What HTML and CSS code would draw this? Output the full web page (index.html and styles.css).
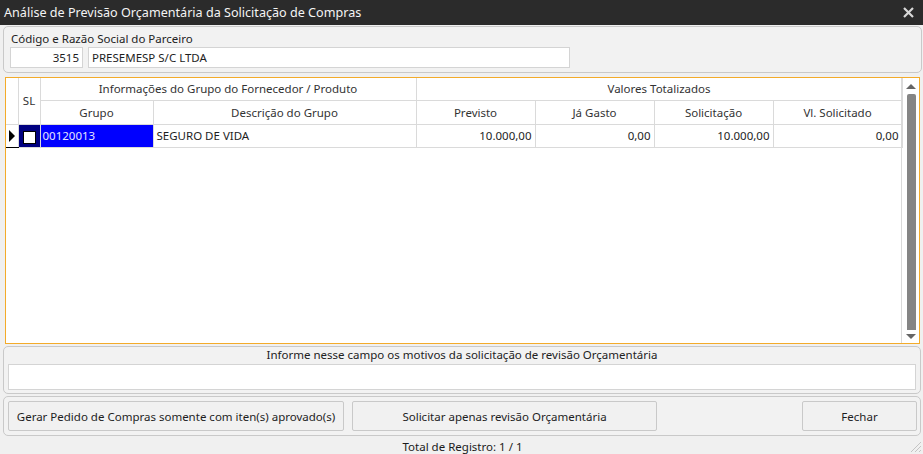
FILE: index.html
```html
<!DOCTYPE html>
<html lang="pt-BR">
<head>
<meta charset="utf-8">
<title>Análise de Previsão Orçamentária</title>
<link rel="stylesheet" href="styles.css">
</head>
<body>
<div class="window">
  <div class="titlebar">
    <span class="title">Análise de Previsão Orçamentária da Solicitação de Compras</span>
    <svg class="close" width="11" height="11" viewBox="0 0 11 11"><path d="M1 1 L10 10 M10 1 L1 10" stroke="#d8d8d8" stroke-width="2.2" fill="none"/></svg>
  </div>

  <div class="content">
    <section class="group partner">
      <div class="label">Código e Razão Social do Parceiro</div>
      <div class="fields">
        <div class="input code">3515</div>
        <div class="input name">PRESEMESP S/C LTDA</div>
      </div>
    </section>

    <div class="grid">
      <div class="grid-area">
        <table class="table">
          <colgroup>
            <col class="c-ind"><col class="c-sl"><col class="c-grupo"><col class="c-desc">
            <col class="c-val"><col class="c-val"><col class="c-val"><col class="c-last">
          </colgroup>
          <thead>
            <tr class="h1">
              <th rowspan="2" class="ind"></th>
              <th rowspan="2">SL</th>
              <th colspan="2">Informações do Grupo do Fornecedor / Produto</th>
              <th colspan="4">Valores Totalizados</th>
            </tr>
            <tr class="h2">
              <th>Grupo</th>
              <th>Descrição do Grupo</th>
              <th>Previsto</th>
              <th>Já Gasto</th>
              <th>Solicitação</th>
              <th>Vl. Solicitado</th>
            </tr>
          </thead>
          <tbody>
            <tr class="row">
              <td class="ind current"><span class="arrow"></span></td>
              <td class="sel"><span class="check"></span></td>
              <td class="code-cell">00120013</td>
              <td>SEGURO DE VIDA</td>
              <td class="num">10.000,00</td>
              <td class="num">0,00</td>
              <td class="num">10.000,00</td>
              <td class="num">0,00</td>
            </tr>
          </tbody>
        </table>
      </div>
      <div class="scrollbar">
        <span class="arrow-up"></span>
        <span class="thumb"></span>
        <span class="arrow-down"></span>
      </div>
    </div>

    <section class="group reason">
      <div class="label center">Informe nesse campo os motivos da solicitação de revisão Orçamentária</div>
      <div class="input memo"></div>
    </section>

    <section class="group actions">
      <button class="btn wide">Gerar Pedido de Compras somente com iten(s) aprovado(s)</button>
      <button class="btn mid">Solicitar apenas revisão Orçamentária</button>
      <button class="btn close-btn">Fechar</button>
    </section>

    <div class="status">Total de Registro: 1 / 1</div>
  </div>
  <svg class="grip" width="14" height="14" viewBox="0 0 14 14"><path d="M13 3 L3 13 M13 7 L7 13 M13 11 L11 13" stroke="#c4c4c4" stroke-width="1" fill="none"/></svg>
</div>
</body>
</html>
```

FILE: styles.css
```css
* { box-sizing: border-box; }

html, body {
  margin: 0;
  padding: 0;
  width: 923px;
  height: 454px;
  overflow: hidden;
  background: #f0f0f0;
  font-family: "Noto Sans", "Open Sans", sans-serif;
  font-size: 11.5px;
  color: #1e1e1e;
}

.window {
  position: relative;
  width: 923px;
  height: 454px;
  display: flex;
  flex-direction: column;
}

/* title bar */
.titlebar {
  height: 25px;
  background: #2b2b2b;
  color: #f4f4f4;
  display: flex;
  align-items: center;
  justify-content: space-between;
  padding: 0 9px 0 4px;
  font-size: 12.6px;
}
.title { line-height: 25px; }
.close { display: block; }

.content {
  flex: 1;
  display: flex;
  flex-direction: column;
  padding: 1px 1px 0 3px;
}

/* group boxes */
.group {
  border: 1px solid #c9c9c9;
  border-radius: 5px;
  background: #f2f2f2;
}
.label {
  line-height: 15px;
  color: #222;
}
.label.center { text-align: center; }

.partner {
  height: 47px;
  padding: 4px 0 0 6px;
}
.partner .label { padding-left: 1px; }
.fields {
  display: flex;
  gap: 5px;
  margin-top: 1px;
}
.input {
  background: #fff;
  border: 1px solid #d4d4d4;
  height: 21px;
  line-height: 19px;
  padding: 0 3px;
}
.code { width: 73px; text-align: right; }
.name { width: 482px; }

/* data grid */
.grid {
  margin: 4px 2px 0 2px;
  height: 267px;
  border: 1px solid #f3ab2a;
  background: #fff;
  display: flex;
}
.grid-area { width: 895px; }
.table {
  border-collapse: collapse;
  table-layout: fixed;
  width: 895px;
}
.c-ind { width: 12px; }
.c-sl { width: 22px; }
.c-grupo { width: 113px; }
.c-desc { width: 263px; }
.c-val { width: 119px; }
.c-last { width: 129px; }

.table th {
  font-weight: normal;
  color: #333;
  border: 1px solid #dadada;
  padding: 0;
  text-align: center;
  white-space: nowrap;
}
.table thead tr:first-child th { border-top: none; }
.table th.ind { border-left: none; }
.h1 th { height: 22px; }
.h2 th { height: 24px; }

.table td {
  height: 23px;
  border: 1px solid #dadada;
  padding: 0 3px;
  white-space: nowrap;
  overflow: hidden;
}
.table td.ind { border-left: none; padding: 0; }
.table td.current {
  border-top: 1px solid #000;
  border-bottom: 1px solid #000;
  position: relative;
}
.arrow {
  display: block;
  width: 0;
  height: 0;
  margin-left: 3px;
  border-top: 6px solid transparent;
  border-bottom: 6px solid transparent;
  border-left: 6px solid #000;
}
.table td.sel {
  background: #000080;
  padding: 0;
  text-align: center;
}
.check {
  display: inline-block;
  width: 13px;
  height: 13px;
  background: #fff;
  border: 1px solid #000;
  vertical-align: middle;
  margin-top: 2px;
}
.table td.code-cell {
  background: #0000ff;
  color: #e4e4ff;
  padding-left: 2px;
}
.table td.num { text-align: right; }

/* vertical scrollbar */
.scrollbar {
  width: 18px;
  border-left: 1px solid #dadada;
  display: flex;
  flex-direction: column;
  align-items: center;
  padding: 6px 0 4px;
}
.arrow-up, .arrow-down {
  width: 0;
  height: 0;
  border-left: 5px solid transparent;
  border-right: 5px solid transparent;
}
.arrow-up { border-bottom: 5px solid #666; }
.arrow-down { border-top: 5px solid #666; }
.thumb {
  width: 9px;
  flex: 1;
  margin: 5px 0 4px 1px;
  background: #858585;
  border-radius: 2px 2px 0 0;
}

/* motive box */
.reason {
  margin-top: 2px;
  height: 48px;
  padding: 0 4px 0 4px;
  margin-right: 1px;
}
.reason .label { line-height: 15px; padding-top: 0; }
.memo {
  height: 26px;
  margin-top: 2px;
}

/* buttons */
.actions {
  margin-top: 2px;
  margin-right: 1px;
  height: 40px;
  display: flex;
  align-items: center;
  padding: 0 4px 0 4px;
}
.btn {
  font: inherit;
  color: #1e1e1e;
  background: #f1f1f1;
  border: 1px solid #c9c9c9;
  border-radius: 2px;
  height: 30px;
  padding: 0;
}
.wide { width: 336px; }
.mid { width: 305px; margin-left: 8px; }
.close-btn { width: 115px; margin-left: auto; margin-right: -1px; }

.status {
  text-align: center;
  line-height: 18px;
  margin-top: 2px;
  color: #1a1a1a;
}

.grip {
  position: absolute;
  right: 1px;
  bottom: 1px;
}
```
